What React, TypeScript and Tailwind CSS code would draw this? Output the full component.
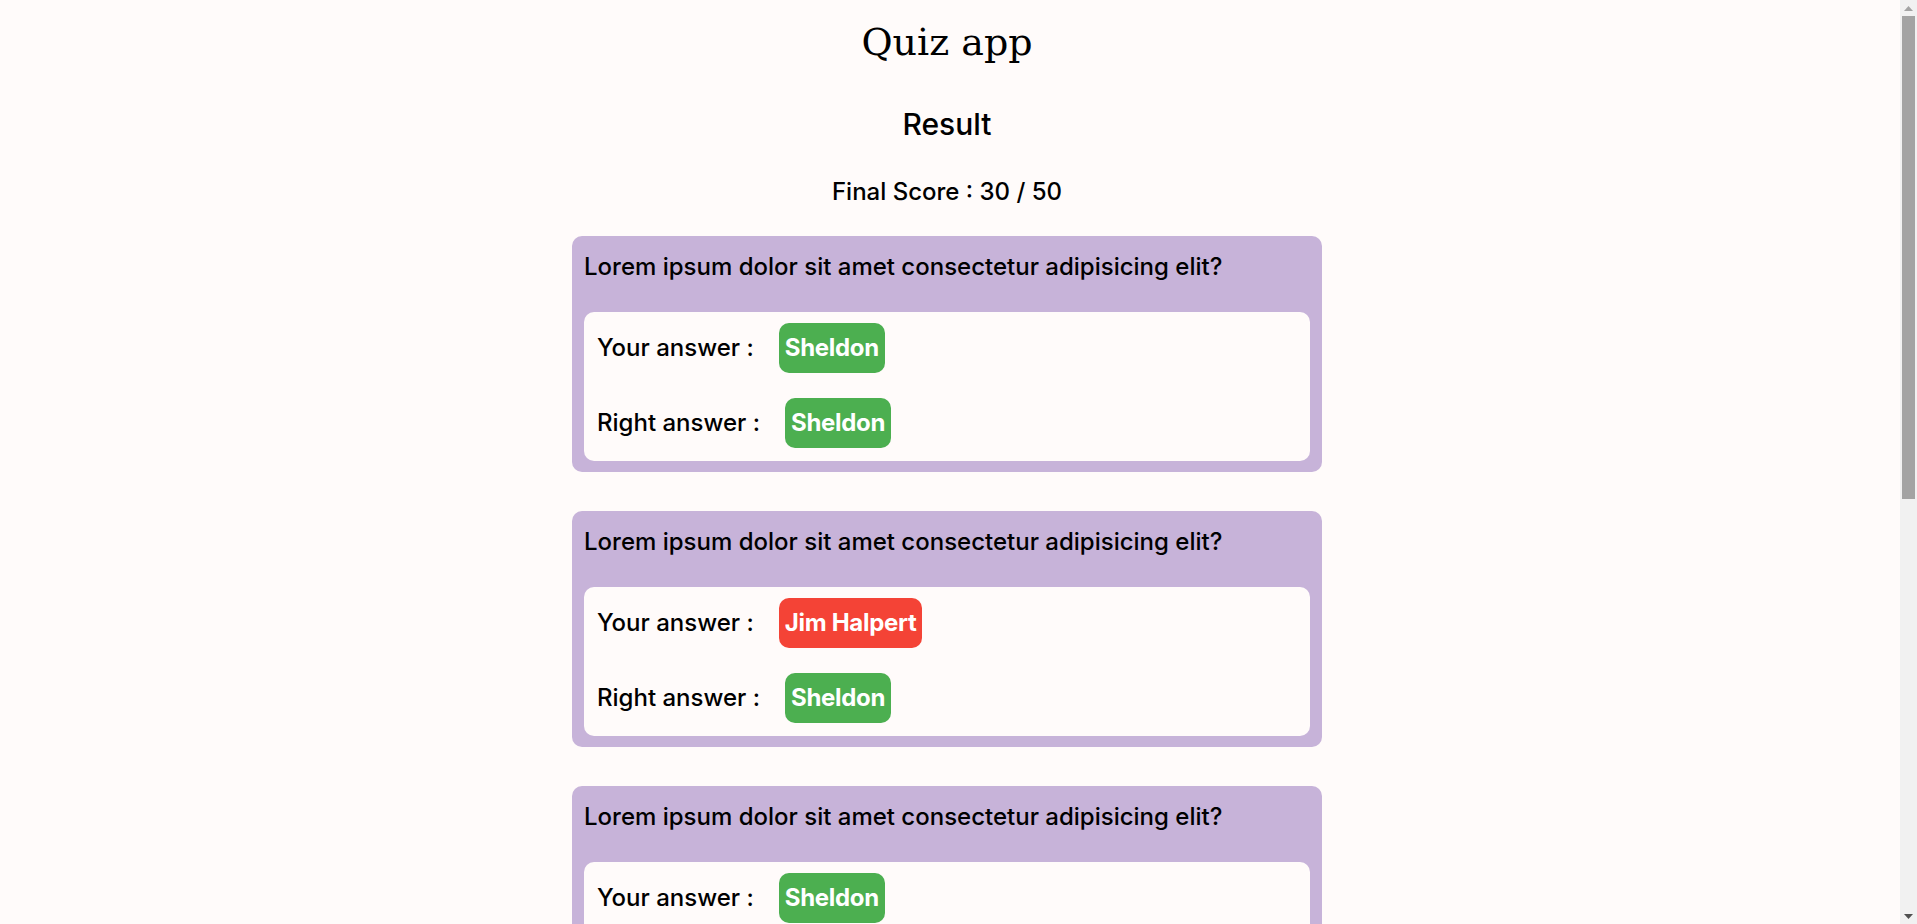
import React from 'react';

type Answer = {
  question: string;
  yours: string;
  right: string;
};

const results: Answer[] = [
  { question: 'Lorem ipsum dolor sit amet consectetur adipisicing elit?', yours: 'Sheldon', right: 'Sheldon' },
  { question: 'Lorem ipsum dolor sit amet consectetur adipisicing elit?', yours: 'Jim Halpert', right: 'Sheldon' },
  { question: 'Lorem ipsum dolor sit amet consectetur adipisicing elit?', yours: 'Sheldon', right: 'Sheldon' },
  { question: 'Lorem ipsum dolor sit amet consectetur adipisicing elit?', yours: 'Ross Geller', right: 'Sheldon' },
  { question: 'Lorem ipsum dolor sit amet consectetur adipisicing elit?', yours: 'Sheldon', right: 'Sheldon' },
];

function Pill({ text, ok }: { text: string; ok: boolean }) {
  return (
    <span
      className={
        'rounded-[10px] px-[6px] py-[7px] text-[24px] leading-[36px] font-bold tracking-[-0.3px] text-white ' +
        (ok ? 'bg-[#4caf50]' : 'bg-[#f44336]')
      }
    >
      {text}
    </span>
  );
}

// fake classic scrollbar, as in the screenshot
function Scrollbar() {
  return (
    <div className="flex w-[17px] shrink-0 flex-col bg-[#f1f1f1]">
      <div className="flex h-[16px] items-center justify-center">
        <svg width="9" height="5" viewBox="0 0 9 5">
          <path d="M4.5 0 L9 5 L0 5 Z" fill="#a3a3a3" />
        </svg>
      </div>
      <div className="mx-[2px] h-[483px] bg-[#a3a3a3]" />
      <div className="flex-1" />
      <div className="flex h-[16px] items-center justify-center">
        <svg width="9" height="5" viewBox="0 0 9 5">
          <path d="M0 0 L9 0 L4.5 5 Z" fill="#505050" />
        </svg>
      </div>
    </div>
  );
}

export default function App() {
  const score = results.filter(r => r.yours === r.right).length * 10;

  return (
    <div className="flex h-screen bg-[#fffbfa] font-['Inter',sans-serif] text-black">
      <div className="flex-1 overflow-y-auto pr-[6px] [scrollbar-width:none]">
        <div className="mx-auto flex w-[750px] flex-col items-center pt-[14px] pb-[130px]">
          <h1 className="font-['DejaVu_Serif',serif] text-[38px] leading-[56px]">Quiz app</h1>

          <h2 className="mt-[34px] text-[30px] leading-[40px] font-medium">Result</h2>

          <p className="mt-[32px] text-[24px] leading-[32px] font-medium">
            Final Score : {score} / {results.length * 10}
          </p>

          <div className="mt-[28px] flex w-full flex-col gap-[39px]">
            {results.map((r, i) => (
              <div key={i} className="rounded-[10px] bg-[#c7b3d9] px-3 pt-[13px] pb-[11px]">
                <p className="text-[24px] leading-[36px] font-medium">{r.question}</p>

                <div className="mt-[27px] flex flex-col gap-[25px] rounded-[10px] bg-[#fffbfa] px-[13px] pt-[11px] pb-[13px]">
                  <div className="flex items-center gap-[25px]">
                    <span className="text-[24px] leading-[36px] font-medium">Your answer :</span>
                    <Pill text={r.yours} ok={r.yours === r.right} />
                  </div>
                  <div className="flex items-center gap-[25px]">
                    <span className="text-[24px] leading-[36px] font-medium">Right answer :</span>
                    <Pill text={r.right} ok />
                  </div>
                </div>
              </div>
            ))}
          </div>
        </div>
      </div>
      <Scrollbar />
    </div>
  );
}
